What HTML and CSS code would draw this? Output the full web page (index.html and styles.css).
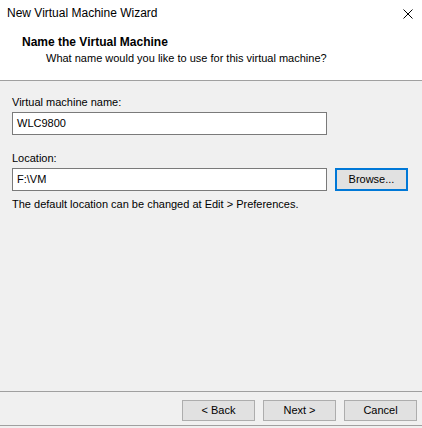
FILE: index.html
```html
<!DOCTYPE html>
<html>
<head>
<meta charset="utf-8">
<link rel="stylesheet" href="styles.css">
</head>
<body>
<div class="window">
  <div class="top">
    <div class="titlebar">
      <span class="title">New Virtual Machine Wizard</span>
      <svg class="close" width="10" height="10" viewBox="0 0 10 10"><path d="M0.5 0.5 L9.5 9.5 M9.5 0.5 L0.5 9.5" stroke="#000" stroke-width="1" fill="none"/></svg>
    </div>
    <div class="heading">Name the Virtual Machine</div>
    <div class="subheading">What name would you like to use for this virtual machine?</div>
  </div>
  <div class="content">
    <div class="label">Virtual machine name:</div>
    <div class="row">
      <div class="input">WLC9800</div>
    </div>
    <div class="label loc">Location:</div>
    <div class="row">
      <div class="input">F:\VM</div>
      <div class="btn browse">Browse...</div>
    </div>
    <div class="note">The default location can be changed at Edit &gt; Preferences.</div>
  </div>
  <div class="footer">
    <div class="btn">&lt; Back</div>
    <div class="btn">Next &gt;</div>
    <div class="btn">Cancel</div>
  </div>
  <div class="bottomedge"></div>
</div>
</body>
</html>
```
FILE: styles.css
```css
html, body {
  margin: 0;
  padding: 0;
}
body {
  width: 422px;
  height: 428px;
  background: #f0f0f0;
  font-family: "Liberation Sans", Arial, sans-serif;
  font-size: 11px;
  color: #000;
  overflow: hidden;
}
.window {
  display: flex;
  flex-direction: column;
  height: 428px;
}
.top {
  background: #fff;
  height: 80px;
  border-bottom: 1px solid #a0a0a0;
}
.titlebar {
  display: flex;
  justify-content: space-between;
  align-items: center;
  height: 16px;
  line-height: 16px;
  font-size: 12px;
  padding: 5px 9px 0 7px;
}
.close {
  display: block;
  margin-top: 2px;
}
.heading {
  font-weight: bold;
  font-size: 12px;
  line-height: 16px;
  margin-top: 13px;
  padding-left: 22px;
}
.subheading {
  line-height: 16px;
  padding-left: 46px;
}
.content {
  padding: 13px 12px 0 12px;
  flex: 1;
}
.label {
  line-height: 16px;
  margin-bottom: 2px;
}
.label.loc {
  margin-top: 15px;
}
.row {
  display: flex;
  align-items: center;
  gap: 8px;
}
.input {
  box-sizing: border-box;
  width: 315px;
  height: 23px;
  border: 1px solid #7a7a7a;
  background: #fff;
  padding-left: 4px;
  line-height: 21px;
}
.btn {
  box-sizing: border-box;
  width: 73px;
  height: 21px;
  background: #e1e1e1;
  border: 1px solid #adadad;
  text-align: center;
  line-height: 19px;
}
.browse {
  height: 23px;
  border: 2px solid #0078d7;
  line-height: 19px;
}
.note {
  line-height: 16px;
  margin-top: 5px;
}
.footer {
  border-top: 1px solid #a0a0a0;
  height: 34px;
  display: flex;
  justify-content: flex-end;
  gap: 8px;
  padding: 8px 5px 0 0;
  box-sizing: border-box;
}
.bottomedge {
  height: 2px;
  border-top: 1px solid #a0a0a0;
}
```
